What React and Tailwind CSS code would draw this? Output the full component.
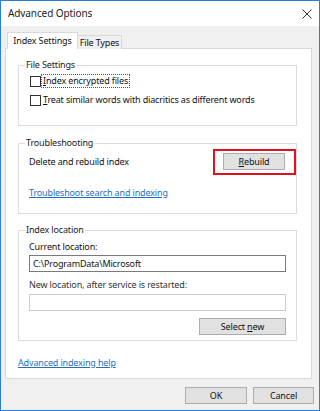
import React from "react";

const font = { fontFamily: '"Noto Sans", "Open Sans", sans-serif' };

function Checkbox({ accel, rest, focused }) {
  return (
    <div className="flex items-center h-[14px]">
      <div className="w-[11px] h-[11px] border border-[#333] bg-white" />
      <span
        className={
          "ml-[1px] px-[1px] leading-[12px] " +
          (focused ? "outline outline-1 outline-dotted outline-[#555]" : "")
        }
      >
        <span className="underline">{accel}</span>
        {rest}
      </span>
    </div>
  );
}

function Group({ title, className, children }) {
  return (
    <div className={"relative border border-[#dcdcdc] " + className}>
      <span className="absolute left-[6px] top-[-8px] bg-white px-[1px] leading-[14px] text-[#1a1a1a]">
        {title}
      </span>
      {children}
    </div>
  );
}

function Btn({ children, className }) {
  return (
    <div
      className={
        "h-[17px] flex items-center justify-center bg-[#e1e1e1] border border-[#adadad] " +
        className
      }
    >
      {children}
    </div>
  );
}

export default function App() {
  return (
    <div
      className="w-[320px] h-[411px] border border-[#2b7fd2] bg-[#f0f0f0] flex flex-col text-[9px] tracking-[-0.15px] text-[#111] overflow-hidden whitespace-nowrap"
      style={font}
    >
      <div className="h-[25px] bg-white flex items-center justify-between pl-[7px] pr-[7px] shrink-0">
        <span className="text-[10px] tracking-[-0.1px] text-[#222]">Advanced Options</span>
        <svg width="10" height="10" viewBox="0 0 10 10">
          <path d="M0.5 0.5 L9.5 9.5 M9.5 0.5 L0.5 9.5" stroke="#333" strokeWidth="1" />
        </svg>
      </div>

      <div className="flex items-end pl-[6px] h-[23px] shrink-0 relative z-10">
        <div className="h-[17px] w-[71px] bg-white border border-b-0 border-[#d9d9d9] flex items-center justify-center">
          Index Settings
        </div>
        <div className="h-[14px] w-[44px] bg-[#f0f0f0] border border-l-0 border-b-0 border-[#d9d9d9] flex items-center justify-center">
          File Types
        </div>
      </div>

      <div className="ml-[4px] mt-[-1px] w-[307px] h-[331px] bg-white border border-[#d9d9d9] pl-[12px] pr-[14px] flex flex-col shrink-0">
        <Group title="File Settings" className="mt-[16px] h-[61px] pt-[8px] pl-[11px]">
          <Checkbox accel="I" rest="ndex encrypted files" focused />
          <div className="h-[5px]" />
          <Checkbox accel="T" rest="reat similar words with diacritics as different words" />
        </Group>

        <Group title="Troubleshooting" className="mt-[17px] h-[71px] pt-[9px] pl-[10px] pr-[11px]">
          <div className="flex items-center justify-between h-[17px]">
            <span>Delete and rebuild index</span>
            <div className="relative">
              <Btn className="w-[62px]">
                <span><span className="underline">R</span>ebuild</span>
              </Btn>
              <div className="absolute left-[-10px] top-[-4px] w-[83px] h-[26px] border-2 border-[#e0101e]" />
            </div>
          </div>
          <div className="mt-[16px] text-[#1f6fc5] underline leading-[14px]">
            Troubleshoot search and indexing
          </div>
        </Group>

        <Group title="Index location" className="mt-[16px] h-[111px] pt-[9px] pl-[10px] pr-[10px]">
          <div className="leading-[14px]">Current location:</div>
          <div className="mt-[1px] h-[17px] w-[257px] border border-[#7a7a7a] bg-white flex items-center pl-[3px]">
            C:\ProgramData\Microsoft
          </div>
          <div className="mt-[6px] leading-[14px] text-[#333]">New location, after service is restarted:</div>
          <div className="mt-[2px] h-[17px] w-[257px] border border-[#cccccc] bg-white" />
          <div className="flex justify-end mt-[7px]">
            <Btn className="w-[87px]">
              <span>Select <span className="underline">n</span>ew</span>
            </Btn>
          </div>
        </Group>

        <div className="mt-[15px] text-[#1f6fc5] underline leading-[14px]">
          Advanced indexing help
        </div>
      </div>

      <div className="flex justify-end gap-[6px] pr-[5px] mt-[8px]">
        <Btn className="w-[62px] border-[#0078d7]">OK</Btn>
        <Btn className="w-[61px]">Cancel</Btn>
      </div>
    </div>
  );
}
